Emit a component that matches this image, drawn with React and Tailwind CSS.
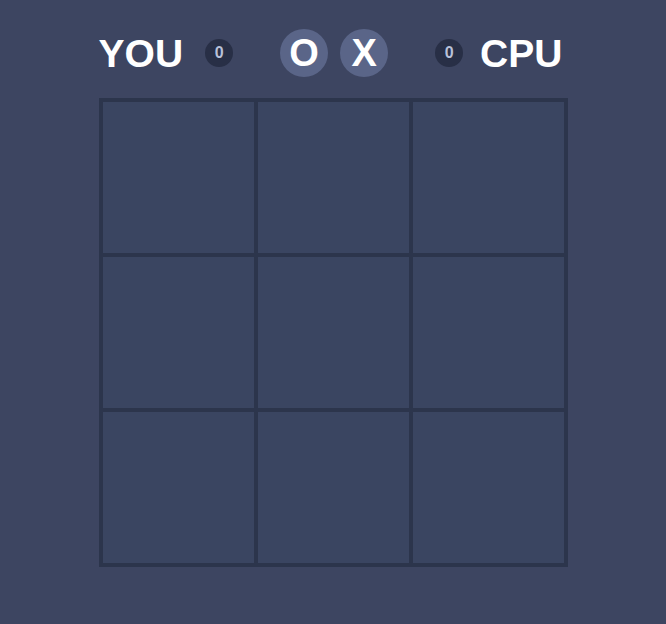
import React from 'react';

const cells = Array.from({ length: 9 });

function Score({ value }) {
	return (
		<div className="flex h-[28px] w-[28px] items-center justify-center rounded-full bg-[#282f46] text-[16px] font-bold text-[#b9c1d9]">
			{value}
		</div>
	);
}

export default function App() {
	return (
		<div
			className="flex min-h-[624px] w-full flex-col items-center bg-[#3d4561] pt-[29px]"
			style={{ fontFamily: '"Liberation Sans", Arial, sans-serif' }}
		>
			{/* Header: players and marks */}
			<div className="mr-[5px] flex h-[48px] items-center">
				<span className="mr-[22px] text-[39px] leading-none font-bold text-white">YOU</span>
				<Score value={0} />
				<div className="mx-[47px] flex items-center gap-[12px]">
					<div className="flex h-[48px] w-[48px] items-center justify-center rounded-full bg-[#5a6588] text-[38px] leading-none font-bold text-white">
						O
					</div>
					<div className="flex h-[48px] w-[48px] items-center justify-center rounded-full bg-[#5a6588] text-[38px] leading-none font-bold text-white">
						X
					</div>
				</div>
				<Score value={0} />
				<span className="ml-[17px] text-[39px] leading-none font-bold text-white">CPU</span>
			</div>

			{/* Board */}
			<div className="mt-[21px] grid grid-cols-3 gap-[4px] bg-[#2c354c] p-[4px]">
				{cells.map((_, i) => (
					<div key={i} className="h-[151px] w-[151px] bg-[#3a4561]" />
				))}
			</div>
		</div>
	);
}
